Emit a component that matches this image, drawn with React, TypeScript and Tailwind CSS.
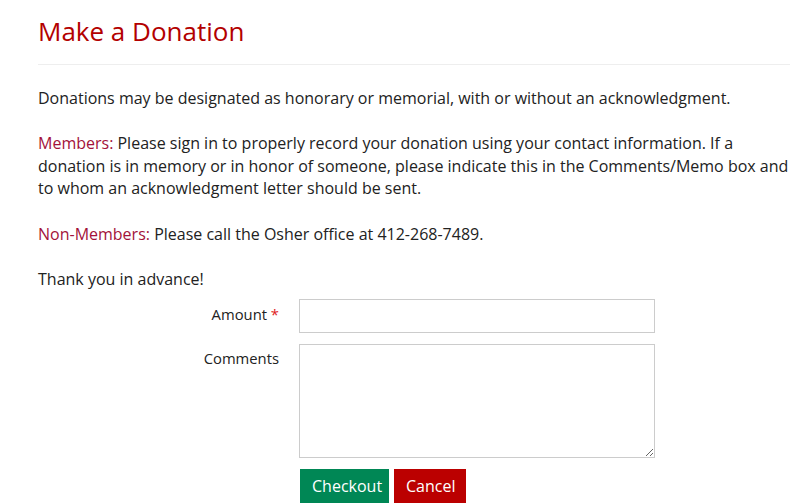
export default function App() {
  return (
    <div className="bg-white min-h-screen font-['Open_Sans',sans-serif] text-[16px] leading-[22.5px] text-[#222]">
      <div className="ml-[38px] w-[752px] pt-[12px]">
        <h1 className="text-[26px] leading-[38px] text-[#b30000] font-normal">Make a Donation</h1>
        <hr className="mt-[14px] border-t border-[#eeeeee]" />
        <div className="pt-[22px]">
          <p>Donations may be designated as honorary or memorial, with or without an acknowledgment.</p>
          <p className="mt-[22.5px]">
            <span className="text-[#a3123a]">Members:</span> Please sign in to properly record your donation using your
            contact information. If a donation is in memory or in honor of someone, please indicate this in the
            Comments/Memo box and to whom an acknowledgment letter should be sent.
          </p>
          <p className="mt-[23px]">
            <span className="text-[#a3123a]">Non-Members:</span> Please call the Osher office at 412-268-7489.
          </p>
          <p className="mt-[23px]">Thank you in advance!</p>
        </div>
        <form className="mt-[8px] text-[14.8px]">
          <div className="flex gap-[20px]">
            <label className="w-[241px] text-right pt-[4px]">
              Amount <span className="text-[#e02020]">*</span>
            </label>
            <input type="text" className="w-[356px] h-[34px] border border-[#cccccc] outline-none px-2" />
          </div>
          <div className="flex gap-[20px] mt-[11px]">
            <label className="w-[241px] text-right pt-[3px]">Comments</label>
            <textarea className="w-[356px] h-[114px] border border-[#cccccc] outline-none px-2 py-1" />
          </div>
          <div className="flex gap-[5px] ml-[262px] mt-[11px]">
            <button type="button" className="bg-[#008755] text-white text-[16px] px-[12px] h-[36px] w-[89px]">
              Checkout
            </button>
            <button type="button" className="bg-[#bb0000] text-white text-[16px] px-[12px] h-[36px] w-[72px]">
              Cancel
            </button>
          </div>
        </form>
      </div>
    </div>
  )
}
